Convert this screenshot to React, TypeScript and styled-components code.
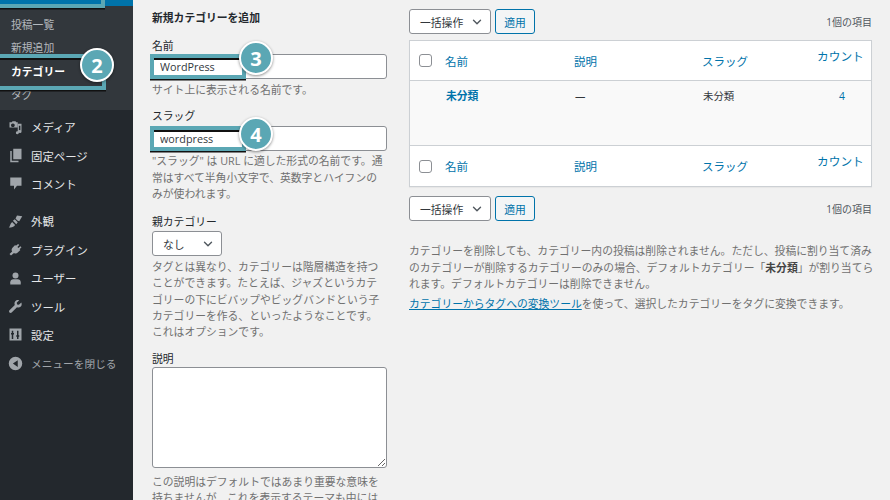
import React from "react";
import styled, { createGlobalStyle } from "styled-components";
import { ChevronDown } from "lucide-react";

const GlobalStyle = createGlobalStyle`
  html, body {
    margin: 0;
    padding: 0;
    background: #f1f1f1;
  }
  body {
    font-family: "Open Sans", "Noto Sans CJK JP", sans-serif;
    font-size: 10.8px;
    overflow: hidden;
  }
  * {
    box-sizing: border-box;
  }
`;

const Page = styled.div`
  position: relative;
  display: grid;
  grid-template-columns: 133px 1fr;
  width: 890px;
  height: 500px;
  overflow: hidden;
`;

const Sidebar = styled.nav`
  background: #23282d;
  display: flex;
  flex-direction: column;
`;

const ActiveTop = styled.div`
  height: 6px;
  background: #0073aa;
`;

const SubMenu = styled.ul`
  list-style: none;
  margin: 0;
  padding: 10px 0 0;
  height: 104px;
  background: #32373c;
`;

const SubItem = styled.li<{ $active?: boolean }>`
  height: 23.3px;
  line-height: 18px;
  padding-left: 11px;
  font-size: 10.8px;
  color: ${(p) => (p.$active ? "#fff" : "#b4b9be")};
  font-weight: ${(p) => (p.$active ? 700 : 400)};
`;

const MainMenu = styled.div`
  display: flex;
  flex-direction: column;
  padding-top: 3px;
`;

const MenuItem = styled.div<{ $gap?: number; $dim?: boolean }>`
  display: flex;
  align-items: center;
  gap: 8px;
  height: 28.4px;
  padding-left: 8px;
  margin-top: ${(p) => p.$gap ?? 0}px;
  font-size: ${(p) => (p.$dim ? "10.7px" : "11.4px")};
  color: ${(p) => (p.$dim ? "#a0a5aa" : "#e4e6e8")};
  svg {
    flex: none;
    width: 15px;
    height: 15px;
    fill: #a0a5aa;
  }
`;

const Main = styled.main`
  display: grid;
  grid-template-columns: 235px 463px;
  column-gap: 22px;
  padding: 0 0 0 19px;
  height: 500px;
  overflow: hidden;
`;

const FormColumn = styled.section`
  padding-top: 10px;
`;

const FormTitle = styled.h2`
  margin: 0 0 12px;
  font-size: 10.8px;
  line-height: 16px;
  font-weight: 700;
  color: #23282d;
`;

const Label = styled.label<{ $space?: number }>`
  display: block;
  font-size: 10.8px;
  line-height: 16px;
  color: #23282d;
  margin-bottom: ${(p) => p.$space ?? 0}px;
`;

const TextInput = styled.input`
  display: block;
  width: 235px;
  height: 25px;
  padding: 0 7px;
  border: 1px solid #8c8f94;
  border-radius: 3px;
  background: #fff;
  font-family: inherit;
  font-size: 10.8px;
  color: #32373c;
  outline: none;
`;

const Help = styled.p<{ $top?: number; $bottom?: number }>`
  margin: ${(p) => p.$top ?? 3}px 0 ${(p) => p.$bottom ?? 10}px;
  font-size: 10.8px;
  line-height: 16.3px;
  color: #707070;
`;

const SelectBox = styled.div<{ $w: number }>`
  display: flex;
  align-items: center;
  justify-content: space-between;
  width: ${(p) => p.$w}px;
  height: 25px;
  padding: 0 6px 0 10px;
  border: 1px solid #8c8f94;
  border-radius: 3px;
  background: #fff;
  font-size: 10.8px;
  color: #32373c;
  svg {
    width: 14px;
    height: 14px;
    color: #50575e;
  }
`;

const TextArea = styled.textarea`
  display: block;
  width: 235px;
  height: 101px;
  border: 1px solid #8c8f94;
  border-radius: 3px;
  background: #fff;
  outline: none;
`;

const ListColumn = styled.section`
  padding-top: 9px;
`;

const TableNav = styled.div`
  display: flex;
  align-items: center;
  gap: 4px;
  height: 25px;
`;

const ApplyButton = styled.button`
  width: 40px;
  height: 25px;
  padding: 0;
  border: 1px solid #0073aa;
  border-radius: 3px;
  background: #f3f5f6;
  font-family: inherit;
  font-size: 10.8px;
  color: #0073aa;
`;

const ItemCount = styled.span`
  margin-left: auto;
  font-size: 10px;
  color: #50575e;
`;

const Table = styled.div`
  margin: 6px 0 9px;
  border: 1px solid #ccd0d4;
  background: #fff;
  box-shadow: 0 1px 1px rgba(0, 0, 0, 0.04);
`;

const Row = styled.div<{ $h: number; $body?: boolean }>`
  display: grid;
  grid-template-columns: 35px 129px 128px 115px 1fr;
  align-items: center;
  height: ${(p) => p.$h}px;
  background: ${(p) => (p.$body ? "#f9f9f9" : "#fff")};
  border-top: ${(p) => (p.$body ? "1px solid #ccd0d4" : "none")};
  border-bottom: ${(p) => (p.$body ? "1px solid #ccd0d4" : "none")};
`;

const BodyRow = styled(Row)`
  align-items: start;
  padding-top: 7px;
  font-size: 10.4px;
  color: #32373c;
  line-height: 16px;
`;

const CheckCell = styled.span`
  justify-self: start;
  margin-left: 9px;
  width: 13px;
  height: 13px;
  border: 1px solid #8c8f94;
  border-radius: 3px;
  background: #fff;
`;

const HeadLink = styled.a`
  font-size: 11.5px;
  color: #0073aa;
`;

const CountLink = styled(HeadLink)`
  position: relative;
  top: -5.5px;
  font-size: 11.7px;
`;

const StrongLink = styled.a`
  font-weight: 700;
  font-size: 10.8px;
  color: #0073aa;
  padding-left: 1px;
`;

const Cell = styled.span`
  padding-left: 1px;
`;

const CountValue = styled.a`
  color: #0073aa;
  padding-left: 22px;
`;

const Notes = styled.div`
  margin-top: 22px;
  color: #707070;
  font-size: 10.8px;
  line-height: 16.5px;
  p {
    margin: 0 0 3px;
    white-space: nowrap;
  }
  strong {
    color: #444;
  }
  a {
    color: #0073aa;
    text-decoration: underline;
  }
`;

const Highlight = styled.div<{ $x: number; $y: number; $w: number; $h: number }>`
  position: absolute;
  left: ${(p) => p.$x}px;
  top: ${(p) => p.$y}px;
  width: ${(p) => p.$w}px;
  height: ${(p) => p.$h}px;
  border: 4px solid #5ba7b4;
  box-shadow: inset 0 2px 0 #111, 0 1.5px 0 #111;
`;

const Badge = styled.div<{ $x: number; $y: number }>`
  position: absolute;
  left: ${(p) => p.$x - 17}px;
  top: ${(p) => p.$y - 17}px;
  width: 34px;
  height: 34px;
  display: flex;
  align-items: center;
  justify-content: center;
  border-radius: 50%;
  border: 2px solid #fff;
  background: #5ba7b4;
  box-shadow: 0 1px 3px rgba(0, 0, 0, 0.45);
  color: #fff;
  font-family: "Open Sans", sans-serif;
  font-size: 20px;
  font-weight: 700;
`;

const MediaIcon = () => (
  <svg viewBox="0 0 20 20">
    <path d="M2 3h3l1-1.500h4L11 3h2v7H2zM6.500 4.500a2.500 2.500 0 1 0 .01 0z" fillRule="evenodd" />
    <path d="M13 5h5v10.500a2 2 0 1 1-1.500-2V7.500h-2V17a2 2 0 1 1-1.500-2z" />
  </svg>
);
const PagesIcon = () => (
  <svg viewBox="0 0 20 20">
    <path d="M7 1h11v14H7z" />
    <path d="M5 4v13h9v2H3V4z" />
  </svg>
);
const CommentIcon = () => (
  <svg viewBox="0 0 20 20">
    <path d="M3 2h15v11h-6l-4 5v-5H3z" />
  </svg>
);
const AppearanceIcon = () => (
  <svg viewBox="0 0 20 20">
    <path d="M12 2l7 1-4 6.500-2-.5-1.500-1.500L10 6zM9 7l4 4-2 2.500-4.500-4.500zM5.500 10.500l4 4C8 17 5 18 1 18c2-2 1.500-5 4.500-7.500z" />
  </svg>
);
const PluginIcon = () => (
  <svg viewBox="0 0 20 20">
    <path d="M13.500 2.500l1.500 1.500-2.500 2.500 1.500 1.500 2.500-2.500 1.500 1.500-2.500 2.500 1 1-3.500 3.500c-1.500 1.500-3.500 1.500-5 .5L4 18l-2-2 3.500-3.500c-1-1.500-1-3.500.5-5L9.500 4l1 1z" />
  </svg>
);
const UserIcon = () => (
  <svg viewBox="0 0 20 20">
    <circle cx="10" cy="6" r="4" />
    <path d="M3 18v-3c0-2.500 2-4 4-4h6c2 0 4 1.500 4 4v3z" />
  </svg>
);
const ToolsIcon = () => (
  <svg viewBox="0 0 20 20">
    <path d="M17.800 4.500l-3.300 3.300-2.300-.6-.6-2.300L14.900 1.700C12.800.9 10.400 1.500 9.300 3.500 8.400 5 8.500 6.700 9.100 8L2 15.100c-.8.800-.8 2.100 0 2.900s2.100.8 2.900 0L12 10.900c1.500.6 3.300.5 4.700-.5 1.600-1.400 2-3.800 1.100-5.900z" />
  </svg>
);
const SettingsIcon = () => (
  <svg viewBox="0 0 20 20">
    <path
      fillRule="evenodd"
      d="M2 2h16v16H2zM5 5v3H4v2h1v6h2v-6h1V8H7V5zM12 5v6h-1v2h1v3h2v-3h1v-2h-1V5z"
    />
  </svg>
);
const CollapseIcon = () => (
  <svg viewBox="0 0 20 20">
    <path fillRule="evenodd" d="M10 1a9 9 0 1 1 0 18 9 9 0 0 1 0-18zM13 5.500L6.500 10l6.500 4.500z" />
  </svg>
);

const menu = [
  { label: "メディア", icon: <MediaIcon /> },
  { label: "固定ページ", icon: <PagesIcon /> },
  { label: "コメント", icon: <CommentIcon /> },
  { label: "外観", icon: <AppearanceIcon />, gap: 9 },
  { label: "プラグイン", icon: <PluginIcon /> },
  { label: "ユーザー", icon: <UserIcon /> },
  { label: "ツール", icon: <ToolsIcon /> },
  { label: "設定", icon: <SettingsIcon /> },
];

function BulkBar() {
  return (
    <TableNav>
      <SelectBox $w={82}>
        一括操作
        <ChevronDown strokeWidth={2.4} />
      </SelectBox>
      <ApplyButton>適用</ApplyButton>
      <ItemCount>1個の項目</ItemCount>
    </TableNav>
  );
}

function HeadRow({ h }: { h: number }) {
  return (
    <Row $h={h}>
      <CheckCell />
      <HeadLink>名前</HeadLink>
      <HeadLink>説明</HeadLink>
      <HeadLink>スラッグ</HeadLink>
      <CountLink>カウント</CountLink>
    </Row>
  );
}

export default function App() {
  return (
    <Page>
      <GlobalStyle />
      <Sidebar>
        <ActiveTop />
        <SubMenu>
          <SubItem>投稿一覧</SubItem>
          <SubItem>新規追加</SubItem>
          <SubItem $active>カテゴリー</SubItem>
          <SubItem>タグ</SubItem>
        </SubMenu>
        <MainMenu>
          {menu.map((m) => (
            <MenuItem key={m.label} $gap={m.gap}>
              {m.icon}
              {m.label}
            </MenuItem>
          ))}
          <MenuItem $dim>
            <CollapseIcon />
            メニューを閉じる
          </MenuItem>
        </MainMenu>
      </Sidebar>

      <Main>
        <FormColumn>
          <FormTitle>新規カテゴリーを追加</FormTitle>
          <Label>名前</Label>
          <TextInput defaultValue="WordPress" />
          <Help>サイト上に表示される名前です。</Help>
          <Label $space={2}>スラッグ</Label>
          <TextInput defaultValue="wordpress" />
          <Help $top={2} $bottom={12}>
            "スラッグ" は URL に適した形式の名前です。通常はすべて半角小文字で、英数字とハイフンのみが使われます。
          </Help>
          <Label $space={1}>親カテゴリー</Label>
          <SelectBox $w={70}>
            なし
            <ChevronDown strokeWidth={2.4} />
          </SelectBox>
          <Help $bottom={10}>
            タグとは異なり、カテゴリーは階層構造を持つことができます。たとえば、ジャズというカテゴリーの下にビバップやビッグバンドという子カテゴリーを作る、といったようなことです。これはオプションです。
          </Help>
          <Label>説明</Label>
          <TextArea />
          <Help $top={6}>
            この説明はデフォルトではあまり重要な意味を持ちませんが、これを表示するテーマも中には
          </Help>
        </FormColumn>

        <ListColumn>
          <BulkBar />
          <Table>
            <HeadRow h={39} />
            <BodyRow $h={66} $body>
              <span />
              <StrongLink>未分類</StrongLink>
              <Cell>—</Cell>
              <Cell>未分類</Cell>
              <CountValue>4</CountValue>
            </BodyRow>
            <HeadRow h={40} />
          </Table>
          <BulkBar />
          <Notes>
            <p>
              カテゴリーを削除しても、カテゴリー内の投稿は削除されません。ただし、投稿に割り当て済み
              <br />
              のカテゴリーが削除するカテゴリーのみの場合、デフォルトカテゴリー「<strong>未分類</strong>」が割り当てら
              <br />
              れます。デフォルトカテゴリーは削除できません。
            </p>
            <p>
              <a>カテゴリーからタグへの変換ツール</a>を使って、選択したカテゴリーをタグに変換できます。
            </p>
          </Notes>
        </ListColumn>
      </Main>

      <Highlight $x={-4} $y={-24} $w={109} $h={32} />
      <Highlight $x={-4} $y={54} $w={110} $h={36} />
      <Highlight $x={150} $y={54} $w={96} $h={25} />
      <Highlight $x={150} $y={126} $w={96} $h={25} />
      <Badge $x={97} $y={65}>2</Badge>
      <Badge $x={256} $y={58}>3</Badge>
      <Badge $x={256} $y={134}>4</Badge>
    </Page>
  );
}
